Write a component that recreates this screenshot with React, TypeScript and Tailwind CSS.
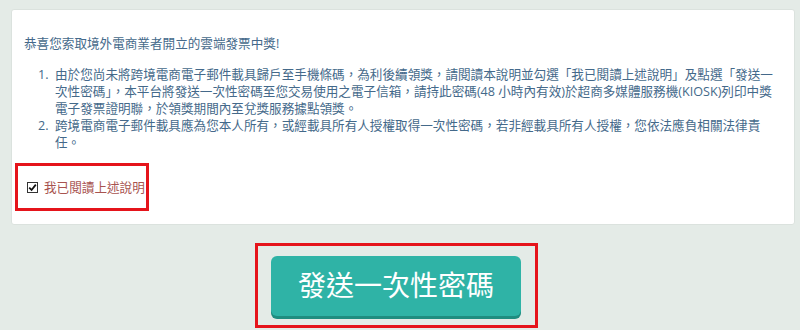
import React from "react";

const font = { fontFamily: '"Open Sans", "Noto Sans CJK TC", sans-serif' };

export default function App() {
  return (
    <div
      className="w-[800px] h-[330px] bg-[#e4ebe7] pt-[9px] pl-[11px] overflow-hidden"
      style={font}
    >
      <div className="w-[784px] h-[216px] bg-white rounded-[3px] border border-[#dbe2de] relative">
        <div className="pt-[25px] pl-[12px] text-[12.6px] leading-[17px] text-[#44698a]">
          <p>恭喜您索取境外電商業者開立的雲端發票中獎!</p>
          <ol className="mt-[14px] pl-[14px]">
            <li className="flex">
              <span className="w-[17px] shrink-0">1.</span>
              <span className="whitespace-nowrap">
                由於您尚未將跨境電商電子郵件載具歸戶至手機條碼，為利後續領獎，請閱讀本說明並勾選「我已閱讀上述說明」及點選「發送一
                <br />
                次性密碼」，本平台將發送一次性密碼至您交易使用之電子信箱，請持此密碼(48 小時內有效)於超商多媒體服務機(KIOSK)列印中獎
                <br />
                電子發票證明聯，於領獎期間內至兌獎服務據點領獎。
              </span>
            </li>
            <li className="flex">
              <span className="w-[17px] shrink-0">2.</span>
              <span className="whitespace-nowrap">
                跨境電商電子郵件載具應為您本人所有，或經載具所有人授權取得一次性密碼，若非經載具所有人授權，您依法應負相關法律責
                <br />
                任。
              </span>
            </li>
          </ol>
        </div>
        <div className="ml-[3px] mt-[12px] w-[134px] h-[48px] border-[3px] border-[#e5141b] flex items-center pl-[9px] gap-[6px]">
          <span className="w-[11px] h-[11px] border border-[#333] bg-white flex items-center justify-center">
            <svg width="9" height="9" viewBox="0 0 9 9">
              <path d="M1.2 4.6 L3.6 7 L7.8 1.6" fill="none" stroke="#111" strokeWidth="1.8" />
            </svg>
          </span>
          <span className="text-[12.6px] text-[#a8534f] leading-[17px]">我已閱讀上述說明</span>
        </div>
      </div>
      <div className="w-[770px] flex justify-center mt-[18px]">
        <div className="w-[283px] h-[85px] border-[3px] border-[#e5141b] flex items-center justify-center pt-[1px]">
          <button className="w-[250px] h-[60px] rounded-[6px] bg-[#2fb3a6] shadow-[0_3px_0_#1f8d80] text-white text-[28px] flex items-center justify-center pb-[2px]">
            發送一次性密碼
          </button>
        </div>
      </div>
    </div>
  );
}
